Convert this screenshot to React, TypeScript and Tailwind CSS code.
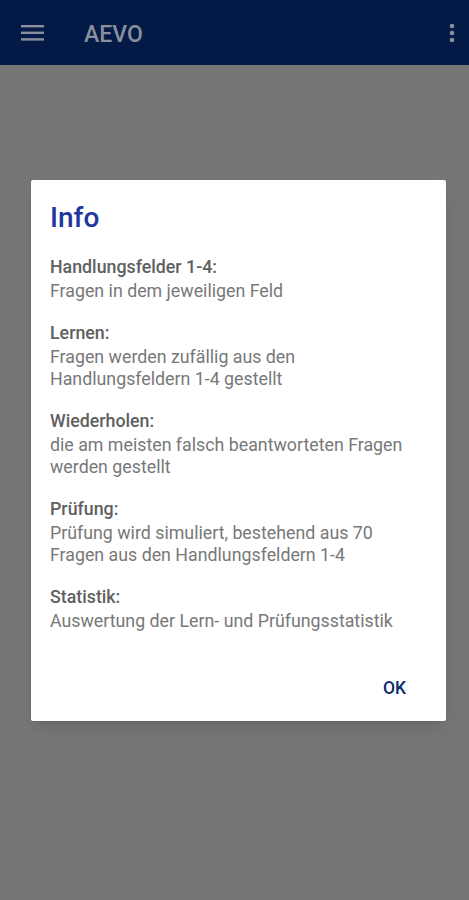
import React from "react";

type InfoSection = {
  title: string;
  text: string[];
};

const sections: InfoSection[] = [
  { title: "Handlungsfelder 1-4:", text: ["Fragen in dem jeweiligen Feld"] },
  {
    title: "Lernen:",
    text: ["Fragen werden zufällig aus den", "Handlungsfeldern 1-4 gestellt"],
  },
  {
    title: "Wiederholen:",
    text: ["die am meisten falsch beantworteten Fragen", "werden gestellt"],
  },
  {
    title: "Prüfung:",
    text: ["Prüfung wird simuliert, bestehend aus 70", "Fragen aus den Handlungsfeldern 1-4"],
  },
  { title: "Statistik:", text: ["Auswertung der Lern- und Prüfungsstatistik"] },
];

const App: React.FC = () => {
  return (
    <div
      className="w-[469px] h-[900px] bg-[#767676] flex flex-col"
      style={{ fontFamily: "Roboto, 'Noto Sans', sans-serif" }}
    >
      <div className="h-[65px] bg-[#031a47] flex items-center shrink-0">
        <svg width="24" height="18" viewBox="0 0 24 18" className="ml-[21px]">
          <rect x="0" y="1" width="23" height="2.4" fill="#8a8f9b" />
          <rect x="0" y="7.6" width="23" height="2.4" fill="#8a8f9b" />
          <rect x="0" y="14.2" width="23" height="2.4" fill="#8a8f9b" />
        </svg>
        <div className="ml-[39px] mt-[3px] text-[23px] font-medium text-[#8a8f9b] leading-none">AEVO</div>
        <div className="flex-1" />
        <svg width="6" height="20" viewBox="0 0 6 20" className="mr-[14px]">
          <circle cx="3" cy="3" r="2.3" fill="#8a8f9b" />
          <circle cx="3" cy="10" r="2.3" fill="#8a8f9b" />
          <circle cx="3" cy="17" r="2.3" fill="#8a8f9b" />
        </svg>
      </div>

      <div className="pt-[115px] pl-[31px]">
        <div className="w-[415px] h-[541px] bg-white rounded-[2px] shadow-lg flex flex-col">
          <div className="pt-[22px] pl-[19px] pr-[16px]">
            <div className="text-[28px] leading-[32px] font-medium text-[#2137a0]">Info</div>
            <div className="mt-[22px] flex flex-col gap-[20px]">
              {sections.map((s) => (
                <div key={s.title} className="text-[17.8px] leading-[22px]">
                  <div className="font-medium text-[#606060] mb-[2px]">{s.title}</div>
                  {s.text.map((line) => (
                    <div key={line} className="text-[#787878]">
                      {line}
                    </div>
                  ))}
                </div>
              ))}
            </div>
          </div>
          <div className="flex justify-end mt-[45px] pr-[40px]">
            <div className="text-[17.5px] leading-[22px] font-medium text-[#0c2c6c]">OK</div>
          </div>
        </div>
      </div>
    </div>
  );
};

export default App;
